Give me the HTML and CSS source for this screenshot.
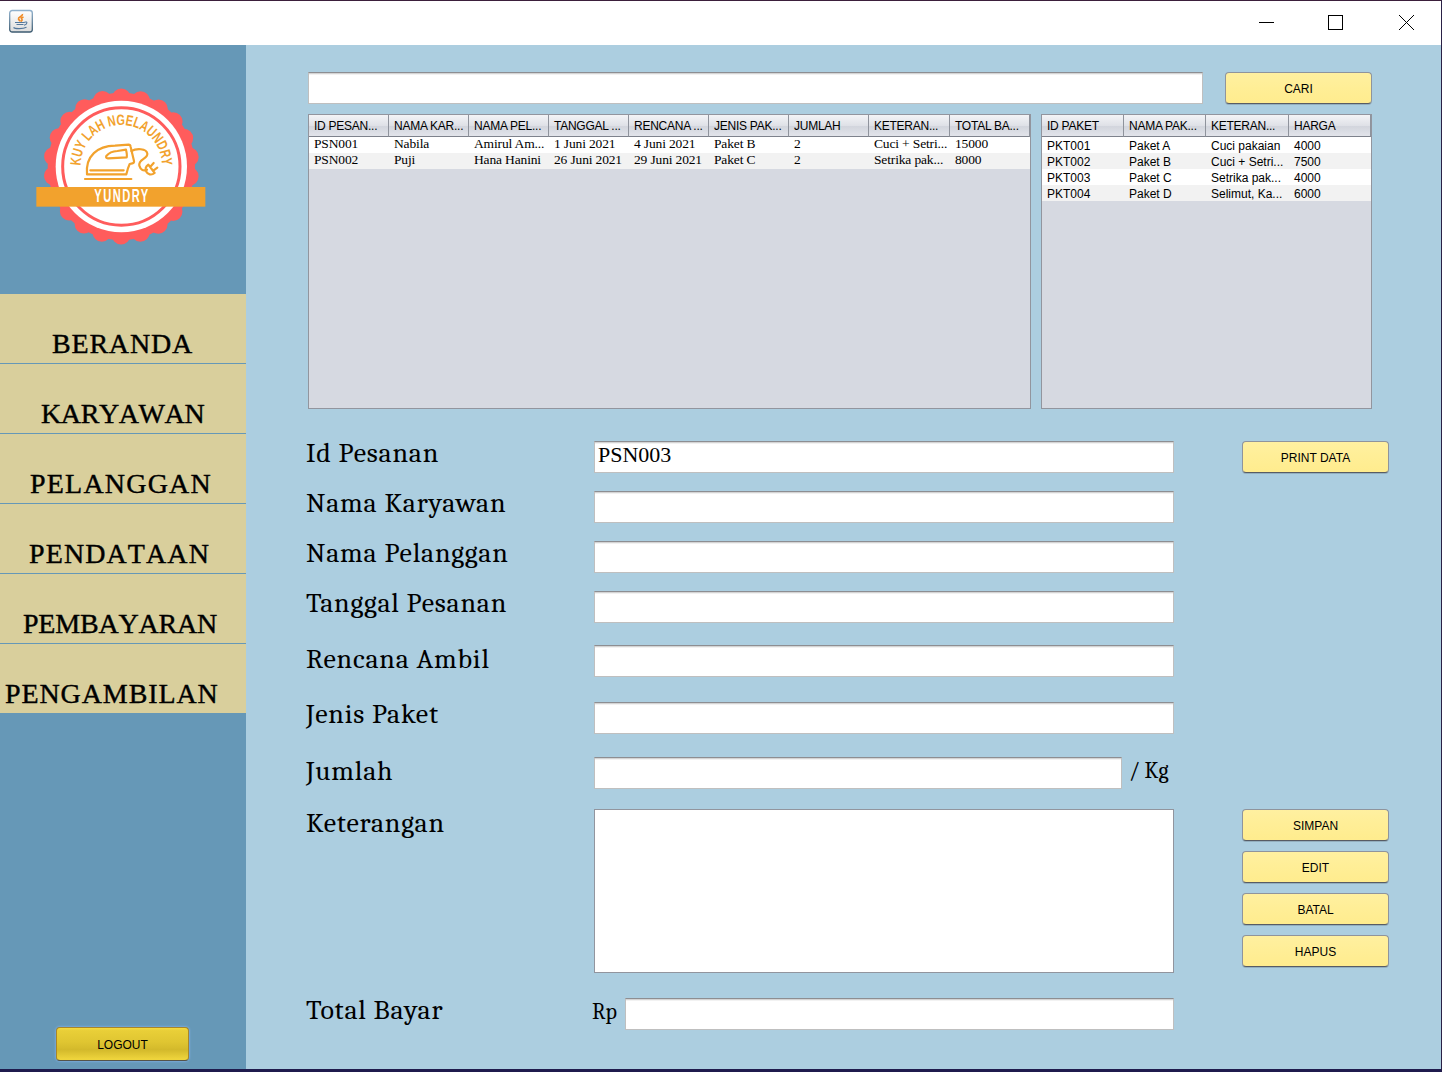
FILE: index.html
```html
<!DOCTYPE html>
<html lang="id">
<head>
<meta charset="utf-8">
<title>Yundry - Pendataan</title>
<link rel="stylesheet" href="styles.css">
</head>
<body>
<div class="window">
  <header class="titlebar">
    <svg class="java-icon" width="24" height="24" viewBox="0 0 24 24">
      <defs><linearGradient id="jbg" x1="0" y1="0" x2="0" y2="1"><stop offset="0" stop-color="#fff"/><stop offset="1" stop-color="#dcdcdc"/></linearGradient>
      <linearGradient id="jbd" x1="0" y1="0" x2="0" y2="1"><stop offset="0" stop-color="#8fb0cc"/><stop offset="1" stop-color="#3c5a70"/></linearGradient></defs>
      <rect x=".7" y="1.500" width="22.6" height="21.500" rx="2.5" fill="url(#jbg)" stroke="url(#jbd)" stroke-width="1.3"/>
      <path d="M13.500 5C14 7.500 9 8 9.500 10C9.800 11 11 11.500 11 12.500M14.500 8C12 9 12 9.500 13 10.500C13.500 11.200 12.500 12 12 12.500" fill="none" stroke="#f08a24" stroke-width="1.700"/>
      <path d="M6 13.500H15.500M7.500 15.500H14.500M15.500 13.200C19 12 18.500 15.500 15 16.200M4.500 18.500C6 20 14 20 17.500 18.300" fill="none" stroke="#54789c" stroke-width="1.100"/>
    </svg>
    <svg class="controls" width="156" height="16" viewBox="0 0 156 16" shape-rendering="crispEdges">
      <path d="M0 7.500H15" stroke="#000" fill="none"/>
      <rect x="69.500" y=".5" width="14" height="14" fill="none" stroke="#000"/>
      <path d="M140 0L155 15M155 0L140 15" stroke="#000" fill="none" shape-rendering="auto"/>
    </svg>
  </header>
  <div class="body">
    <aside class="sidebar">
      <svg class="logo" width="200" height="180" viewBox="0 0 600 540">
        <circle cx="304" cy="274.500" r="221" fill="#ff5c5c"/>
        <circle cx="304" cy="274.500" r="206" fill="none" stroke="#ff5c5c" stroke-width="56" stroke-linecap="round" pathLength="22" stroke-dasharray="0 1" transform="rotate(-90 304 274.500)"/>
        <circle cx="304" cy="274.500" r="197" fill="#fff"/>
        <circle cx="304" cy="274.500" r="176" fill="#fff" stroke="#ff5c5c" stroke-width="9"/>
        <path id="arc" d="M182 272A122 122 0 0 1 426 272" fill="none"/>
        <text class="logo-arc"><textPath href="#arc" textLength="383" lengthAdjust="spacingAndGlyphs">KUY LAH NGELAUNDRY</textPath></text>
        <g fill="none" stroke="#f2a22d" stroke-width="6.500" stroke-linejoin="round" stroke-linecap="round">
          <path d="M201 298C196 242 233 213 285 212L326 209Q331 209 332 216L342 258Q343 264 337 265L329 267Q323 280 319 298Z"/>
          <path d="M259 243Q270 229 292 228L318 224Q322 240 320 247L264 250Q256 249 259 243Z"/>
          <path d="M211 286H311M195 312H334"/>
          <path d="M334 228C348 220 380 219 382 236C384 252 354 252 358 272C362 286 371 289 381 284"/>
          <path d="M385 269L404 294C394 302 383 298 379 290C375 282 378 274 385 269ZM391 275L401 264M400 287L412 278"/>
        </g>
        <rect x="49" y="336" width="507" height="59" fill="#f2a22d"/>
        <text class="logo-name" x="223" y="381" textLength="166" lengthAdjust="spacingAndGlyphs">YUNDRY</text>
      </svg>
      <nav class="nav">
        <a class="nav-item beranda">BERANDA</a>
        <a class="nav-item karyawan">KARYAWAN</a>
        <a class="nav-item pelanggan">PELANGGAN</a>
        <a class="nav-item pendataan">PENDATAAN</a>
        <a class="nav-item pembayaran">PEMBAYARAN</a>
        <a class="nav-item pengambilan">PENGAMBILAN</a>
      </nav>
      <button class="logout">LOGOUT</button>
    </aside>
    <main class="main">
      <div class="search">
        <input class="field" type="text">
        <button class="btn">CARI</button>
      </div>
      <div class="tables">
        <div class="pane orders">
          <table>
            <colgroup><col class="c80"><col class="c80"><col class="c80"><col class="c80"><col class="c80"><col class="c80"><col class="c80"><col class="c81"><col class="c80"></colgroup>
            <thead><tr><th>ID PESAN...</th><th>NAMA KAR...</th><th>NAMA PEL...</th><th>TANGGAL ...</th><th>RENCANA ...</th><th>JENIS PAK...</th><th>JUMLAH</th><th>KETERAN...</th><th>TOTAL BA...</th></tr></thead>
            <tbody>
              <tr><td>PSN001</td><td>Nabila</td><td>Amirul Am...</td><td>1 Juni 2021</td><td>4 Juni 2021</td><td>Paket B</td><td>2</td><td>Cuci + Setri...</td><td>15000</td></tr>
              <tr><td>PSN002</td><td>Puji</td><td>Hana Hanini</td><td>26 Juni 2021</td><td>29 Juni 2021</td><td>Paket C</td><td>2</td><td>Setrika pak...</td><td>8000</td></tr>
            </tbody>
          </table>
        </div>
        <div class="pane packages">
          <table>
            <colgroup><col class="c82"><col class="c82"><col class="c83"><col class="c82"></colgroup>
            <thead><tr><th>ID PAKET</th><th>NAMA PAK...</th><th>KETERAN...</th><th>HARGA</th></tr></thead>
            <tbody>
              <tr><td>PKT001</td><td>Paket A</td><td>Cuci pakaian</td><td>4000</td></tr>
              <tr><td>PKT002</td><td>Paket B</td><td>Cuci + Setri...</td><td>7500</td></tr>
              <tr><td>PKT003</td><td>Paket C</td><td>Setrika pak...</td><td>4000</td></tr>
              <tr><td>PKT004</td><td>Paket D</td><td>Selimut, Ka...</td><td>6000</td></tr>
            </tbody>
          </table>
        </div>
      </div>
      <div class="form">
        <label>Id Pesanan</label><input class="field" type="text" value="PSN003"><button class="btn">PRINT DATA</button>
        <label>Nama Karyawan</label><input class="field" type="text">
        <label>Nama Pelanggan</label><input class="field" type="text">
        <label>Tanggal Pesanan</label><input class="field" type="text">
        <label class="low">Rencana Ambil</label><input class="field" type="text">
        <label>Jenis Paket</label><input class="field" type="text">
        <label class="low">Jumlah</label><div class="group"><input class="field" type="text"><span class="unit kg">/ Kg</span></div>
        <label class="low">Keterangan</label><textarea class="area"></textarea>
        <div class="actions"><button class="btn">SIMPAN</button><button class="btn">EDIT</button><button class="btn">BATAL</button><button class="btn">HAPUS</button></div>
        <label>Total Bayar</label><div class="group"><span class="unit rp">Rp</span><input class="field" type="text"></div>
      </div>
    </main>
  </div>
</div>
</body>
</html>
```
FILE: styles.css
```css
* { box-sizing: border-box; }
body { margin: 0; overflow: hidden; }
.window {
  width: 1442px; height: 1072px; display: flex; flex-direction: column;
  border-top: 1px solid #3b1f3b; border-right: 1px solid #2a2146; border-bottom: 3px solid #1f1b4d;
  background: #fff; color: #000; font-family: "Liberation Sans", Arial, sans-serif;
}
.titlebar { height: 44px; flex: none; display: flex; justify-content: space-between; align-items: flex-start; padding: 8px 26px 0 9px; }
.controls { margin-top: 6px; }
.body { flex: 1; display: flex; min-height: 0; }

.sidebar { width: 246px; background: #6698b7; display: flex; flex-direction: column; padding-top: 30px; }
.logo { margin-left: 20px; flex: none; }
.logo-arc { font: bold 45px "Liberation Sans Narrow", "Liberation Sans", sans-serif; fill: #f2a22d; }
.logo-name { font: bold 54px "Liberation Sans Narrow", "Liberation Sans", sans-serif; letter-spacing: 7px; fill: #fff; }
.nav { margin-top: 39px; }
.nav-item {
  display: block; height: 70px; padding-top: 36px; border-bottom: 1px solid #6698b7; background: #d9cf9c;
  font: 28px/28px "Liberation Serif", "Times New Roman", serif; font-kerning: none; white-space: nowrap;
  -webkit-text-stroke: .4px #000;
}
.beranda { padding-left: 52px; letter-spacing: .8px; }
.karyawan { padding-left: 41px; letter-spacing: -.4px; }
.pelanggan { padding-left: 30px; letter-spacing: 1.200px; }
.pendataan { padding-left: 29px; letter-spacing: 1.100px; }
.pembayaran { padding-left: 23px; letter-spacing: -.2px; }
.pengambilan { padding-left: 5px; letter-spacing: .9px; }

button { font: 12px "Liberation Sans", Arial, sans-serif; color: #000; padding: 2px 0 0; }
.logout {
  margin: 313px 0 0 56px; width: 133px; height: 34px; border: 1px solid #a8862a; border-bottom-color: #55544a; border-radius: 4px;
  background: linear-gradient(#f5dc40 0, #e9cf38 8%, #dfc531 45%, #d3b92b 68%, #eed43c 97%);
  box-shadow: 0 0 2px 1px #78a8d8;
}
.btn {
  width: 147px; height: 32px; border: 1px solid #8f949c; border-bottom-color: #585c64; border-radius: 4px;
  background: linear-gradient(#fff0a0, #ffee96 50%, #ffec8e); box-shadow: 0 1px 0 #93afbf;
}

.main { flex: 1; background: #accee0; padding: 27px 0 0 62px; }
.search { display: flex; gap: 22px; }
.search .field { width: 895px; }
.field {
  display: block; width: 100%; height: 32px; padding: 0 3px 5px; outline: 0; background: #fff;
  border: 1px solid #bfbfbf; border-top-color: #8d8e92; box-shadow: inset 0 1px 0 #d4d4d4, inset 0 2px 0 #f2f2f2;
  font: 22px "Liberation Serif", "Times New Roman", serif; color: #000;
}
.tables { display: flex; gap: 10px; margin-top: 10px; }
.pane { height: 295px; border: 1px solid #92959e; background: #d6d9e1; }
.orders { width: 723px; }
.packages { width: 331px; }
table { table-layout: fixed; border-collapse: separate; border-spacing: 0; width: 100%; }
.c80 { width: 80px; } .c81 { width: 81px; } .c82 { width: 82px; } .c83 { width: 83px; }
th, td { padding: 0 0 0 5px; text-align: left; white-space: nowrap; overflow: hidden; }
th {
  height: 22px; padding-top: 1px; font: 12px/20px "Liberation Sans", Arial, sans-serif; letter-spacing: -.25px;
  border-right: 1px solid #8f939c; border-bottom: 1px solid #7e828c;
  background: linear-gradient(#f3f4f7 0, #dfe1e7 50%, #d2d5dd 55%, #e2e4ea 100%);
}
td { height: 16px; font: 12px/14px "Liberation Sans", Arial, sans-serif; background: #fff; padding-top: 2px; }
tr:nth-child(even) td { background: #f2f2f2; }
.orders td { font: 13.500px/14px "Liberation Serif", "Times New Roman", serif; letter-spacing: -.15px; padding: 0 0 2px 5px; }

.form {
  display: grid; grid-template-columns: 288px 580px 147px; column-gap: 0; align-items: start;
  grid-template-rows: 50px 50px 50px 54px 57px 55px 52px 189px 32px; margin: 32px 0 0 -2px;
}
.form label { grid-column: 1; font: 28px/25px Cambria, Caladea, "Liberation Serif", serif; letter-spacing: .75px; white-space: nowrap; }
.form .low { padding-top: 2px; }
.form > .field, .group, .area { grid-column: 2; }
.form > .btn, .actions { grid-column: 3; margin-left: 68px; }
.group { display: flex; }
.group .field { flex: 1; min-width: 0; }
.unit { font: 22px/25px Cambria, Caladea, "Liberation Serif", serif; white-space: nowrap; }
.kg { width: 52px; padding: 2px 0 0 7px; }
.rp { width: 33px; margin-left: -2px; padding-top: 2px; }
.area { display: block; width: 580px; height: 164px; border: 1px solid #92959e; background: #fff; resize: none; outline: 0; }
.actions { display: flex; flex-direction: column; gap: 10px; }
```
